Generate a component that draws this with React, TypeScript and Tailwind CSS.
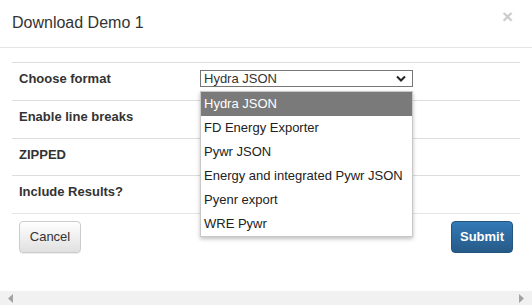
const formats = [
  'Hydra JSON',
  'FD Energy Exporter',
  'Pywr JSON',
  'Energy and integrated Pywr JSON',
  'Pyenr export',
  'WRE Pywr',
]

function Row({ label, h, children }: { label: string; h: string; children?: React.ReactNode }) {
  return (
    <div className={`flex items-start border-t border-[#ddd] ${h}`}>
      <div className="w-[188px] pl-[7px] pt-[6px] font-bold leading-[20px]">{label}</div>
      {children}
    </div>
  )
}

export default function App() {
  return (
    <div
      className="relative flex h-[305px] w-[532px] flex-col overflow-hidden bg-white text-[13px] text-[#333]"
      style={{ fontFamily: '"Liberation Sans", Arial, sans-serif' }}
    >
      {/* Header */}
      <div className="flex h-[48px] shrink-0 items-start justify-between border-b border-[#e5e5e5] pl-[12px] pr-[19px]">
        <h4 className="mt-[11px] text-[16px] leading-[24px]">Download Demo 1</h4>
        <span className="mt-[5px] text-[19px] font-bold leading-[24px] text-black opacity-20">×</span>
      </div>

      {/* Body */}
      <div className="px-[12px] pt-[14px]">
        <Row label="Choose format" h="h-[38px]">
          <div className="mt-[7px] flex h-[17px] w-[213px] items-center justify-between border border-[#767676] bg-white pl-[3px] pr-[6px] leading-none">
            <span>Hydra JSON</span>
            <svg width="10" height="7" viewBox="0 0 10 7" className="text-[#222]">
              <path d="M1 1.5 L5 5.5 L9 1.5" fill="none" stroke="currentColor" strokeWidth="2" />
            </svg>
          </div>
        </Row>
        <Row label="Enable line breaks" h="h-[38px]" />
        <Row label="ZIPPED" h="h-[37px]" />
        <Row label="Include Results?" h="h-[38px]" />
      </div>

      {/* Footer */}
      <div className="mx-[12px] flex items-start justify-between border-t border-[#e5e5e5] px-[7px] pt-[7px]">
        <button className="h-[32px] w-[62px] rounded-[4px] border border-[#ccc] bg-gradient-to-b from-white to-[#e0e0e0] text-[13px] text-[#333] shadow-[inset_0_1px_0_rgba(255,255,255,.15),0_1px_1px_rgba(0,0,0,.075)]">
          Cancel
        </button>
        <button className="h-[32px] w-[62px] rounded-[4px] border border-[#245580] bg-gradient-to-b from-[#337ab7] to-[#265a88] text-[13px] font-bold text-white">
          Submit
        </button>
      </div>

      {/* Horizontal scrollbar */}
      <div className="mt-auto flex h-[14px] items-center justify-between bg-[#f1f1f1] px-[8px]">
        <svg width="5" height="9" viewBox="0 0 5 9">
          <path d="M5 0 L0 4.5 L5 9 Z" fill="#a3a3a3" />
        </svg>
        <svg width="5" height="9" viewBox="0 0 5 9">
          <path d="M0 0 L5 4.5 L0 9 Z" fill="#a3a3a3" />
        </svg>
      </div>

      {/* Open select list */}
      <ul className="absolute left-[200px] top-[91px] w-[213px] border border-[#c8c8c8] bg-white shadow-[0_2px_4px_rgba(0,0,0,0.25)]">
        {formats.map((f, i) => (
          <li
            key={f}
            className={`flex h-[24px] items-center whitespace-nowrap pl-[3px] ${i === 0 ? 'bg-[#7a7a7a] text-white' : 'text-[#222]'}`}
          >
            {f}
          </li>
        ))}
      </ul>
    </div>
  )
}
